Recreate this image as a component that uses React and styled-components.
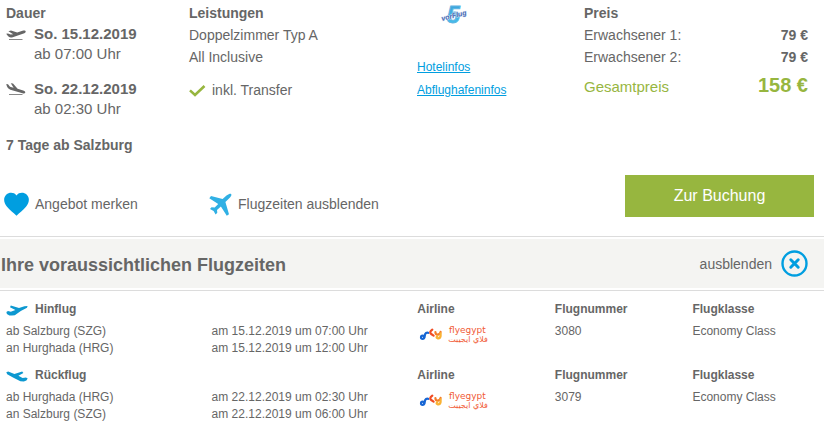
import React from "react";
import styled, { createGlobalStyle, css } from "styled-components";

const GlobalStyle = createGlobalStyle`
  body {
    margin: 0;
    background: #fff;
    color: #666;
    font-family: "Liberation Sans", Arial, sans-serif;
    font-size: 14px;
    line-height: 22px;
  }
`;

const Summary = styled.section`
  display: grid;
  grid-template-columns: 183fr 228fr 167fr 224fr;
  padding: 2px 16px 0 6px;
`;

const Label = styled.h3`
  margin: 0;
  font-size: 14px;
  line-height: 22px;
`;

const Text = styled.div``;

const Departure = styled.div`
  display: flex;
  gap: 8px;
  margin-bottom: 15px;
  font-size: 15px;
  line-height: 20px;

  svg {
    flex: none;
    margin-top: 4px;
  }
`;

const DepartureText = styled.div`
  display: flex;
  flex-direction: column;
`;

const Included = styled.div`
  display: flex;
  align-items: center;
  gap: 6px;
  margin-top: 11px;
`;

const Links = styled.div`
  display: flex;
  flex-direction: column;
  align-items: flex-start;
  font-size: 12px;
  line-height: 23px;

  svg {
    margin: 0 0 28px 22px;
  }
`;

const Link = styled.a`
  color: #009ee0;
`;

const Prices = styled.dl`
  margin: 0;
`;

const PriceRow = styled.div`
  display: flex;
  justify-content: space-between;

  dd {
    margin: 0;
    font-weight: bold;
  }

  ${(props) =>
    props.$total &&
    css`
      color: #97b63f;
      font-size: 15px;
      line-height: 38px;

      dd {
        font-size: 20px;
        line-height: 34px;
      }
    `}
`;

const Duration = styled(Label)`
  padding: 0 6px;
`;

const Actions = styled.div`
  display: grid;
  grid-template-columns: 205fr 416fr 189fr;
  padding: 19px 10px 19px 4px;
`;

const Action = styled.button`
  display: flex;
  align-items: center;
  gap: 6px;
  margin-top: 16px;
  padding: 0;
  border: 0;
  background: none;
  color: inherit;
  font: inherit;
  cursor: pointer;
`;

const BookButton = styled.button`
  height: 42px;
  border: 0;
  background: #97b63f;
  color: #fff;
  font-family: inherit;
  font-size: 16px;
  cursor: pointer;
`;

const TitleBar = styled.header`
  padding: 2px 0;
  border-top: 1px solid #dcdcdc;
  border-bottom: 1px solid #dcdcdc;
`;

const TitleContent = styled.div`
  display: flex;
  align-items: center;
  justify-content: space-between;
  height: 49px;
  padding: 0 16px 0 1px;
  background: #f4f4f2;
`;

const Title = styled.h2`
  margin: 0;
  padding-top: 2px;
  font-size: 18px;
`;

const HideButton = styled.button`
  display: flex;
  align-items: center;
  gap: 9px;
  padding: 0;
  border: 0;
  background: none;
  color: inherit;
  font: inherit;
  cursor: pointer;
`;

const Flights = styled.section`
  padding-top: 10px;
`;

const FlightTable = styled.table`
  width: 100%;
  margin-bottom: 10px;
  table-layout: fixed;
  border-collapse: collapse;
  font-size: 12px;
  line-height: 17px;

  th,
  td {
    padding: 0 0 0 6px;
    text-align: left;
    vertical-align: top;
  }

  th {
    padding-bottom: 5px;
  }
`;

const Column = styled.col`
  width: ${(props) => (props.$wide ? "auto" : "16.7%")};
`;

const Direction = styled.span`
  display: flex;
  align-items: center;
  gap: 7px;
`;

const AirlineLogo = styled.svg`
  display: block;
  margin-top: 2px;
`;

const TakeoffIcon = () => (
  <svg width="20" height="16" viewBox="0 0 20 16" aria-hidden="true">
    <path
      d="M.2 5.8 2 5.4 4.6 6.6 7.2 6.2 2.4 3.2 5 2.6 11.2 4.6 16.5 2.8C18.4 2.3 19.6 2.6 19.7 3.6 19.8 4.6 18.6 5.2 17.6 5.6L6 9.4C3.6 10 2 8.6.2 5.8Z"
      fill="#666"
    />
    <path d="M3 11.5H16.5" stroke="#888" />
  </svg>
);

const LandingIcon = () => (
  <svg width="20" height="16" viewBox="0 0 20 16" aria-hidden="true">
    <path
      d="M.3 1 2 1.3 4 3.8 7.6 4.8 4.8.2 7 .6 11.6 5.8 17.2 7.4C18.9 8 19.6 8.9 19.2 9.8 18.8 10.7 17.6 10.5 16.5 10.2L4.4 6.7C1.8 5.8.8 3.8.3 1Z"
      fill="#666"
    />
    <path d="M3 11.5H16.5" stroke="#888" />
  </svg>
);

const CheckIcon = () => (
  <svg width="17" height="14" viewBox="0 0 17 14" aria-hidden="true">
    <path
      d="M1 7.4 6 12 15.5 3"
      fill="none"
      stroke="#97b63f"
      strokeWidth="2.6"
    />
  </svg>
);

const HeartIcon = () => (
  <svg width="25" height="24" viewBox="0 0 25 24" aria-hidden="true">
    <path
      d="M12.5 3.4C15 0 20 .2 22.6 2.5 25.8 5.5 25.6 10.3 22 14.8 19 18.4 15.6 20.6 12.5 23.8 9.4 20.6 6 18.4 3 14.8-.6 10.3-.8 5.5 2.4 2.5 5 .2 10 0 12.5 3.4Z"
      fill="#009ee0"
    />
  </svg>
);

const PlaneIcon = () => (
  <svg width="23" height="23" viewBox="0 0 23 23" aria-hidden="true">
    <path
      d="M20.2.9C21.4.3 22.8.9 22.4 2.2 22 3.4 21 4.4 20 5.4L16.4 9 20 21.2 17.8 22.7 11.9 13.6 8 16.9 8.3 19.8 6.6 21.4 4.6 18 1 16.1 2.5 14.3 5.7 14.6 9.2 10.9.3 5.2 2 3.1 13.6 6 17.5 2.5C18.3 1.7 19.3 1.3 20.2.9Z"
      fill="#30b0e4"
    />
  </svg>
);

const CloseIcon = () => (
  <svg width="27" height="27" viewBox="0 0 27 27" aria-hidden="true">
    <circle
      cx="13.5"
      cy="13.5"
      r="12"
      fill="none"
      stroke="#009ee0"
      strokeWidth="2.4"
    />
    <path
      d="M9.8 9.8 17.2 17.2M17.2 9.8 9.8 17.2"
      stroke="#009ee0"
      strokeWidth="3"
      strokeLinecap="round"
    />
  </svg>
);

const OutboundIcon = () => (
  <svg width="22" height="13" viewBox="0 0 22 13" aria-hidden="true">
    <path
      d="M.4 9 2 8 4.8 8.8 9.4 6.9 4 4.3 4.8 2.6 13 5 18.4 3.2 21.6 3 21 4.8 14.8 8 8.8 12.2 6 12.6 3.4 12.4.9 11Z"
      fill="#0d98d0"
    />
  </svg>
);

const ReturnIcon = () => (
  <svg width="22" height="13" viewBox="0 0 22 13" aria-hidden="true">
    <path
      d="M.3 3.2 2.2 2.6 8.4 4.9 16.2 2.4 17.4 4 12.4 6.8 16.6 9 20 8.4 21.7 9.6 20.4 11.4 17.8 12.5 14.4 12.2 7 8.4 1.2 5.2Z"
      fill="#0d98d0"
    />
  </svg>
);

const OperatorLogo = () => (
  <svg
    width="32"
    height="26"
    viewBox="0 0 32 26"
    role="img"
    aria-label="5vorFlug"
  >
    <defs>
      <linearGradient id="five" x1="0" y1="0" x2="0" y2="1">
        <stop offset="0" stopColor="#3c9fd8" />
        <stop offset="1" stopColor="#45c5f0" />
      </linearGradient>
    </defs>
    <g
      fontFamily="Liberation Sans, sans-serif"
      fontWeight="bold"
      fontStyle="italic"
    >
      <text
        x="8"
        y="21"
        fontSize="23"
        fill="url(#five)"
        stroke="#5fb4e2"
        strokeWidth="1"
      >
        5
      </text>
      <text
        x="3"
        y="19"
        fontSize="7"
        fill="#4668b0"
        stroke="#dbe8fa"
        strokeWidth="0.8"
        paintOrder="stroke"
        transform="rotate(-14 3 19)"
      >
        vorFlug
      </text>
    </g>
  </svg>
);

const FlyEgyptLogo = () => (
  <AirlineLogo
    width="75"
    height="22"
    viewBox="0 0 75 22"
    role="img"
    aria-label="flyegypt"
  >
    <g fill="none" strokeLinecap="round" strokeWidth="2.2">
      <circle cx="5.6" cy="12.3" r="1.6" stroke="#1766d4" />
      <path d="M7.4 12.3 8.2 9Q9 7.4 11.2 7.8" stroke="#1766d4" />
      <path d="M15.3 4.6Q11.8 7.4 14.2 9L16.6 10.6" stroke="#f04b23" />
      <path d="M18.4 7Q18.4 9.6 20.6 9.6 23.2 9.5 23.6 6.8" stroke="#f47b28" />
      <path d="M23.6 8.4V11Q23 13.8 20.6 13.3 18.6 12.6 20.4 11" stroke="#f9b233" />
    </g>
    <g fill="#f15a35" fontFamily="DejaVu Sans, sans-serif">
      <text x="32" y="8" fontSize="9">
        flyegypt
      </text>
      <text x="51" y="17" fontSize="8" textAnchor="middle">
        فلاي ايجيبت
      </text>
    </g>
  </AirlineLogo>
);

const DEPARTURES = [
  { date: "So. 15.12.2019", time: "ab 07:00 Uhr", icon: <TakeoffIcon /> },
  { date: "So. 22.12.2019", time: "ab 02:30 Uhr", icon: <LandingIcon /> },
];

const FLIGHTS = [
  {
    direction: "Hinflug",
    icon: <OutboundIcon />,
    from: "ab Salzburg (SZG)",
    to: "an Hurghada (HRG)",
    departure: "am 15.12.2019 um 07:00 Uhr",
    arrival: "am 15.12.2019 um 12:00 Uhr",
    number: "3080",
  },
  {
    direction: "Rückflug",
    icon: <ReturnIcon />,
    from: "ab Hurghada (HRG)",
    to: "an Salzburg (SZG)",
    departure: "am 22.12.2019 um 02:30 Uhr",
    arrival: "am 22.12.2019 um 06:00 Uhr",
    number: "3079",
  },
];

const Flight = ({ flight }) => (
  <FlightTable>
    <colgroup>
      <Column $wide />
      <Column $wide />
      <Column />
      <Column />
      <Column />
    </colgroup>
    <thead>
      <tr>
        <th colSpan={2}>
          <Direction>
            {flight.icon}
            {flight.direction}
          </Direction>
        </th>
        <th>Airline</th>
        <th>Flugnummer</th>
        <th>Flugklasse</th>
      </tr>
    </thead>
    <tbody>
      <tr>
        <td>{flight.from}</td>
        <td>{flight.departure}</td>
        <td rowSpan={2}>
          <FlyEgyptLogo />
        </td>
        <td>{flight.number}</td>
        <td>Economy Class</td>
      </tr>
      <tr>
        <td>{flight.to}</td>
        <td>{flight.arrival}</td>
      </tr>
    </tbody>
  </FlightTable>
);

const App = () => {
  return (
    <main>
      <GlobalStyle />
      <Summary>
        <div>
          <Label>Dauer</Label>
          {DEPARTURES.map((d) => (
            <Departure key={d.date}>
              {d.icon}
              <DepartureText>
                <strong>{d.date}</strong>
                <span>{d.time}</span>
              </DepartureText>
            </Departure>
          ))}
        </div>
        <div>
          <Label>Leistungen</Label>
          <Text>Doppelzimmer Typ A</Text>
          <Text>All Inclusive</Text>
          <Included>
            <CheckIcon />
            inkl. Transfer
          </Included>
        </div>
        <Links>
          <OperatorLogo />
          <Link href="#hotel">Hotelinfos</Link>
          <Link href="#airport">Abflughafeninfos</Link>
        </Links>
        <div>
          <Label>Preis</Label>
          <Prices>
            <PriceRow>
              <dt>Erwachsener 1:</dt>
              <dd>79 €</dd>
            </PriceRow>
            <PriceRow>
              <dt>Erwachsener 2:</dt>
              <dd>79 €</dd>
            </PriceRow>
            <PriceRow $total>
              <dt>Gesamtpreis</dt>
              <dd>158 €</dd>
            </PriceRow>
          </Prices>
        </div>
      </Summary>
      <Duration>7 Tage ab Salzburg</Duration>
      <Actions>
        <Action type="button">
          <HeartIcon />
          Angebot merken
        </Action>
        <Action type="button">
          <PlaneIcon />
          Flugzeiten ausblenden
        </Action>
        <BookButton type="button">Zur Buchung</BookButton>
      </Actions>
      <TitleBar>
        <TitleContent>
          <Title>Ihre voraussichtlichen Flugzeiten</Title>
          <HideButton type="button">
            ausblenden
            <CloseIcon />
          </HideButton>
        </TitleContent>
      </TitleBar>
      <Flights>
        {FLIGHTS.map((f) => (
          <Flight key={f.direction} flight={f} />
        ))}
      </Flights>
    </main>
  );
};

export default App;
